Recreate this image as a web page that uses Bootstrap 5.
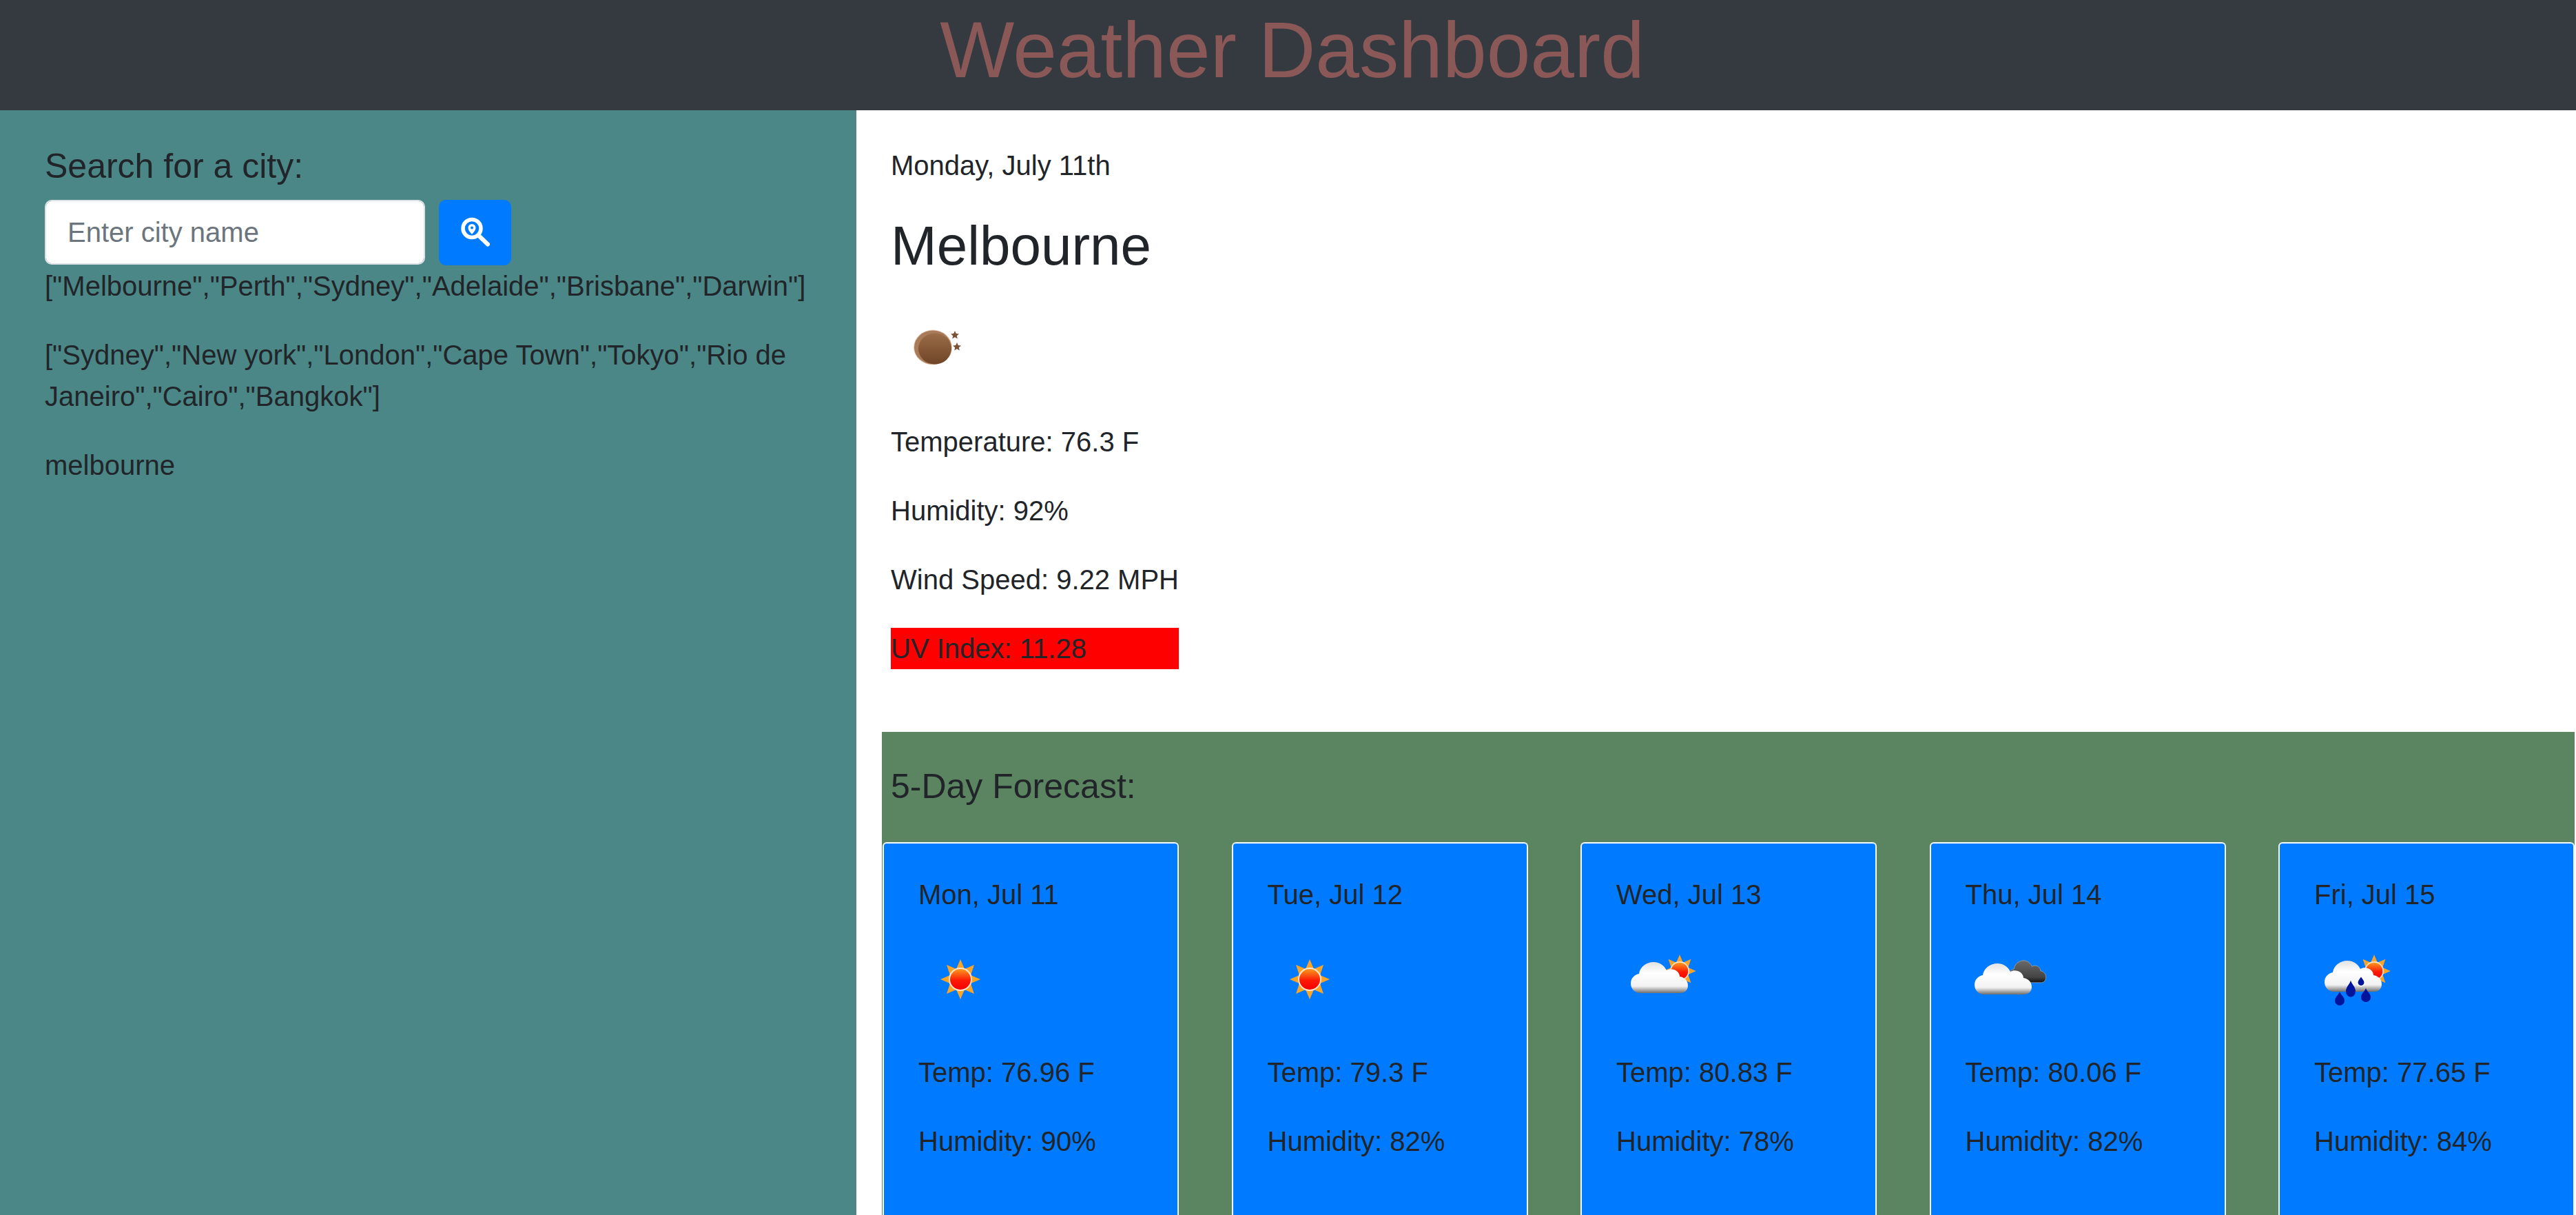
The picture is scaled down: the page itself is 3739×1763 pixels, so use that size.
<!DOCTYPE html>
<html lang="en">
<head>
    <meta charset="UTF-8">
    <meta name="viewport" content="width=device-width, initial-scale=1.0">
    <title>Weather Dashboard</title>
    <link href="https://cdn.jsdelivr.net/npm/bootstrap@5.3.0/dist/css/bootstrap.min.css" rel="stylesheet">
    <style>
        html, body {
            height: 100%;
            overflow: hidden;
        }
        body {
            font-family: "Liberation Sans", Arial, sans-serif;
            font-size: 40px;
            line-height: 60px;
            color: #212529;
            background: #fff;
        }
        p {
            margin-bottom: 40px;
        }
        .top-bar {
            height: 160px;
            padding-left: 12px;
            background: #343a40;
        }
        .top-bar h1 {
            margin: 0;
            font-size: 114.5px;
            line-height: 144px;
            color: #8b5858;
        }
        .app-body {
            height: 1603px;
            overflow: hidden;
        }
        .side-pane {
            width: 1243px;
            flex-shrink: 0;
            padding: 45px 65px 0;
            background: #4b8786;
        }
        .side-title {
            margin: 0 0 13px;
            font-size: 50px;
            line-height: 72px;
        }
        .side-pane .form-control {
            width: 552px;
            height: 94px;
            padding: 0 31px;
            font-size: 40px;
            border-radius: 10px;
            border-width: 2px;
        }
        .side-pane .form-control::placeholder {
            color: #6c757d;
        }
        .search-form {
            gap: 20px;
        }
        .search-btn {
            width: 105px;
            height: 95px;
            padding: 0;
            background: #007bff;
            border-color: #007bff;
            border-radius: 10px;
        }
        .main-pane {
            min-width: 0;
            padding-top: 50px;
        }
        .today {
            padding-left: 50px;
            width: fit-content;
            box-sizing: content-box;
        }
        .today h2 {
            margin: 0 0 43px;
            font-size: 80px;
            line-height: 86px;
        }
        .today-date {
            margin-bottom: 44px;
        }
        .wx-icon {
            display: block;
            width: 120px;
            height: 120px;
            filter: blur(.6px);
        }
        .today .wx-icon {
            margin-bottom: 48px;
        }
        .uv-bad {
            margin-bottom: 0;
            background: #f00;
        }
        .forecast {
            margin: 91px 2px 0 37px;
            padding-top: 50px;
            background: #5a8560;
            height: 800px;
        }
        .forecast h3 {
            margin: 0 0 52px 13px;
            font-size: 50px;
            line-height: 58px;
        }
        .day-tile {
            width: 430px;
            height: 700px;
            margin-left: 1px;
            background: #007bff;
            border: 2px solid #f4f8ff;
            border-bottom: 0;
            border-radius: 6px 6px 0 0;
        }
        .day-tile .card-body {
            padding: 44px 50px 0;
        }
        .day-tile .tile-date {
            margin-bottom: 33px;
        }
        .day-tile .wx-icon {
            margin-bottom: 45px;
        }
    </style>
</head>
<body>
    <svg class="d-block" width="0" height="0">
        <defs>
            <linearGradient id="sunFill" x1="0" y1="0" x2="0" y2="1">
                <stop offset="0" stop-color="#fb9a1e"/>
                <stop offset=".55" stop-color="#fb1a06"/>
                <stop offset="1" stop-color="#f80000"/>
            </linearGradient>
            <linearGradient id="cloudFill" x1="0" y1="0" x2="0" y2="1">
                <stop offset="0" stop-color="#e2e2e2"/>
                <stop offset=".35" stop-color="#fff"/>
                <stop offset=".78" stop-color="#f2f2f2"/>
                <stop offset="1" stop-color="#6e6e6e"/>
            </linearGradient>
            <linearGradient id="darkFill" x1="0" y1="0" x2="0" y2="1">
                <stop offset="0" stop-color="#6a6a6a"/>
                <stop offset=".75" stop-color="#444"/>
                <stop offset="1" stop-color="#111"/>
            </linearGradient>
            <linearGradient id="rockFill" x1="0" y1="0" x2="0" y2="1">
                <stop offset="0" stop-color="#9a6c48"/>
                <stop offset="1" stop-color="#6f4527"/>
            </linearGradient>
            <g id="sunMark">
                <path fill="#f8a428" d="M0-29 6-15 20-21 15-6 29 0 15 6 20 21 6 15 0 29-6 15-20 21-15 6-29 0-15-6-20-21-6-15Z"/>
                <circle r="17" fill="#fde6cf"/>
                <circle r="15" fill="url(#sunFill)"/>
            </g>
            <path id="cloudMark" d="M36 80C26 80 21 73 21 66 21 58 27 53 33 52 34 42 44 35 54 35 64 35 70 41 73 47 76 45 80 45 84 46 90 48 92 53 92 56 99 57 104 62 104 69 104 76 99 80 93 80Z"/>
            <path id="dropMark" fill="#00149c" d="M0-11C2-6 7-3 7 2A7 7 0 0 1-7 2C-7-3-2-6 0-11Z"/>
            <path id="dustMark" fill="#7b5236" d="M0-6 1.8-2 6-1.6 2.8 1.2 3.8 5.4 0 3.2-3.8 5.4-2.8 1.2-6-1.6-1.8-2Z"/>
        </defs>
    </svg>

    <header class="top-bar text-center">
        <h1>Weather Dashboard</h1>
    </header>

    <div class="app-body d-flex">
        <aside class="side-pane">
            <p class="side-title">Search for a city:</p>
            <form class="search-form d-flex" onsubmit="return false">
                <input type="text" class="form-control" placeholder="Enter city name">
                <button type="submit" class="btn btn-primary search-btn d-flex align-items-center justify-content-center" aria-label="Search">
                    <svg width="48" height="48" viewBox="0 0 48 48">
                        <circle cx="19" cy="17.5" r="13" fill="none" stroke="#fff" stroke-width="5.5"/>
                        <path d="M29 28 42 40.5" stroke="#fff" stroke-width="6" stroke-linecap="round"/>
                        <path fill="#fff" fill-rule="evenodd" d="M19 26C15.5 22 13.5 19.5 13.5 16.5A5.5 5.5 0 0 1 24.5 16.5C24.5 19.5 22.5 22 19 26ZM19 14.5A2 2 0 1 0 19 18.5 2 2 0 0 0 19 14.5Z"/>
                    </svg>
                </button>
            </form>
            <p>["Melbourne","Perth","Sydney","Adelaide","Brisbane","Darwin"]</p>
            <p>["Sydney","New york","London","Cape Town","Tokyo","Rio de Janeiro","Cairo","Bangkok"]</p>
            <p>melbourne</p>
        </aside>

        <main class="main-pane flex-grow-1">
            <section class="today">
                <p class="today-date">Monday, July 11th</p>
                <h2>Melbourne</h2>
                <svg class="wx-icon" viewBox="0 0 120 120" role="img" aria-label="Haze">
                    <ellipse cx="61" cy="61" rx="28" ry="25.5" fill="#e6d3c3"/>
                    <ellipse cx="61" cy="61" rx="27" ry="24.5" fill="#a97b59"/>
                    <ellipse cx="64" cy="63" rx="24" ry="22.5" fill="url(#rockFill)"/>
                    <use href="#dustMark" transform="translate(93 43)"/>
                    <use href="#dustMark" transform="translate(96 60)"/>
                </svg>
                <p>Temperature: 76.3 F</p>
                <p>Humidity: 92%</p>
                <p>Wind Speed: 9.22 MPH</p>
                <p class="uv-bad">UV Index: 11.28</p>
            </section>

            <section class="forecast">
                <h3>5-Day Forecast:</h3>
                <div class="d-flex justify-content-between">
                    <div class="card day-tile">
                        <div class="card-body">
                            <p class="tile-date">Mon, Jul 11</p>
                            <svg class="wx-icon" viewBox="0 0 120 120" role="img" aria-label="Clear">
                                <use href="#sunMark" transform="translate(61 60)"/>
                            </svg>
                            <p>Temp: 76.96 F</p>
                            <p>Humidity: 90%</p>
                        </div>
                    </div>
                    <div class="card day-tile">
                        <div class="card-body">
                            <p class="tile-date">Tue, Jul 12</p>
                            <svg class="wx-icon" viewBox="0 0 120 120" role="img" aria-label="Clear">
                                <use href="#sunMark" transform="translate(61 60)"/>
                            </svg>
                            <p>Temp: 79.3 F</p>
                            <p>Humidity: 82%</p>
                        </div>
                    </div>
                    <div class="card day-tile">
                        <div class="card-body">
                            <p class="tile-date">Wed, Jul 13</p>
                            <svg class="wx-icon" viewBox="0 0 120 120" role="img" aria-label="Few clouds">
                                <use href="#sunMark" transform="translate(92 48) scale(.82)"/>
                                <use href="#cloudMark" fill="url(#cloudFill)"/>
                            </svg>
                            <p>Temp: 80.83 F</p>
                            <p>Humidity: 78%</p>
                        </div>
                    </div>
                    <div class="card day-tile">
                        <div class="card-body">
                            <p class="tile-date">Thu, Jul 14</p>
                            <svg class="wx-icon" viewBox="0 0 120 120" role="img" aria-label="Broken clouds">
                                <use href="#cloudMark" fill="url(#darkFill)" stroke="#aaa" stroke-width="1" transform="translate(49 8) scale(.65 .71)"/>
                                <use href="#cloudMark" fill="url(#cloudFill)" transform="translate(-8 2)"/>
                            </svg>
                            <p>Temp: 80.06 F</p>
                            <p>Humidity: 82%</p>
                        </div>
                    </div>
                    <div class="card day-tile">
                        <div class="card-body">
                            <p class="tile-date">Fri, Jul 15</p>
                            <svg class="wx-icon" viewBox="0 0 120 120" role="img" aria-label="Light rain">
                                <use href="#sunMark" transform="translate(87 48) scale(.82)"/>
                                <use href="#cloudMark" fill="url(#cloudFill)" transform="translate(-6 -2)"/>
                                <use href="#dropMark" transform="translate(53 75) scale(1 1.2)"/>
                                <use href="#dropMark" stroke="#fff" stroke-width="2" transform="translate(68 63) scale(.75)"/>
                                <use href="#dropMark" transform="translate(75 84)"/>
                                <use href="#dropMark" transform="translate(37 89)"/>
                            </svg>
                            <p>Temp: 77.65 F</p>
                            <p>Humidity: 84%</p>
                        </div>
                    </div>
                </div>
            </section>
        </main>
    </div>
</body>
</html>
